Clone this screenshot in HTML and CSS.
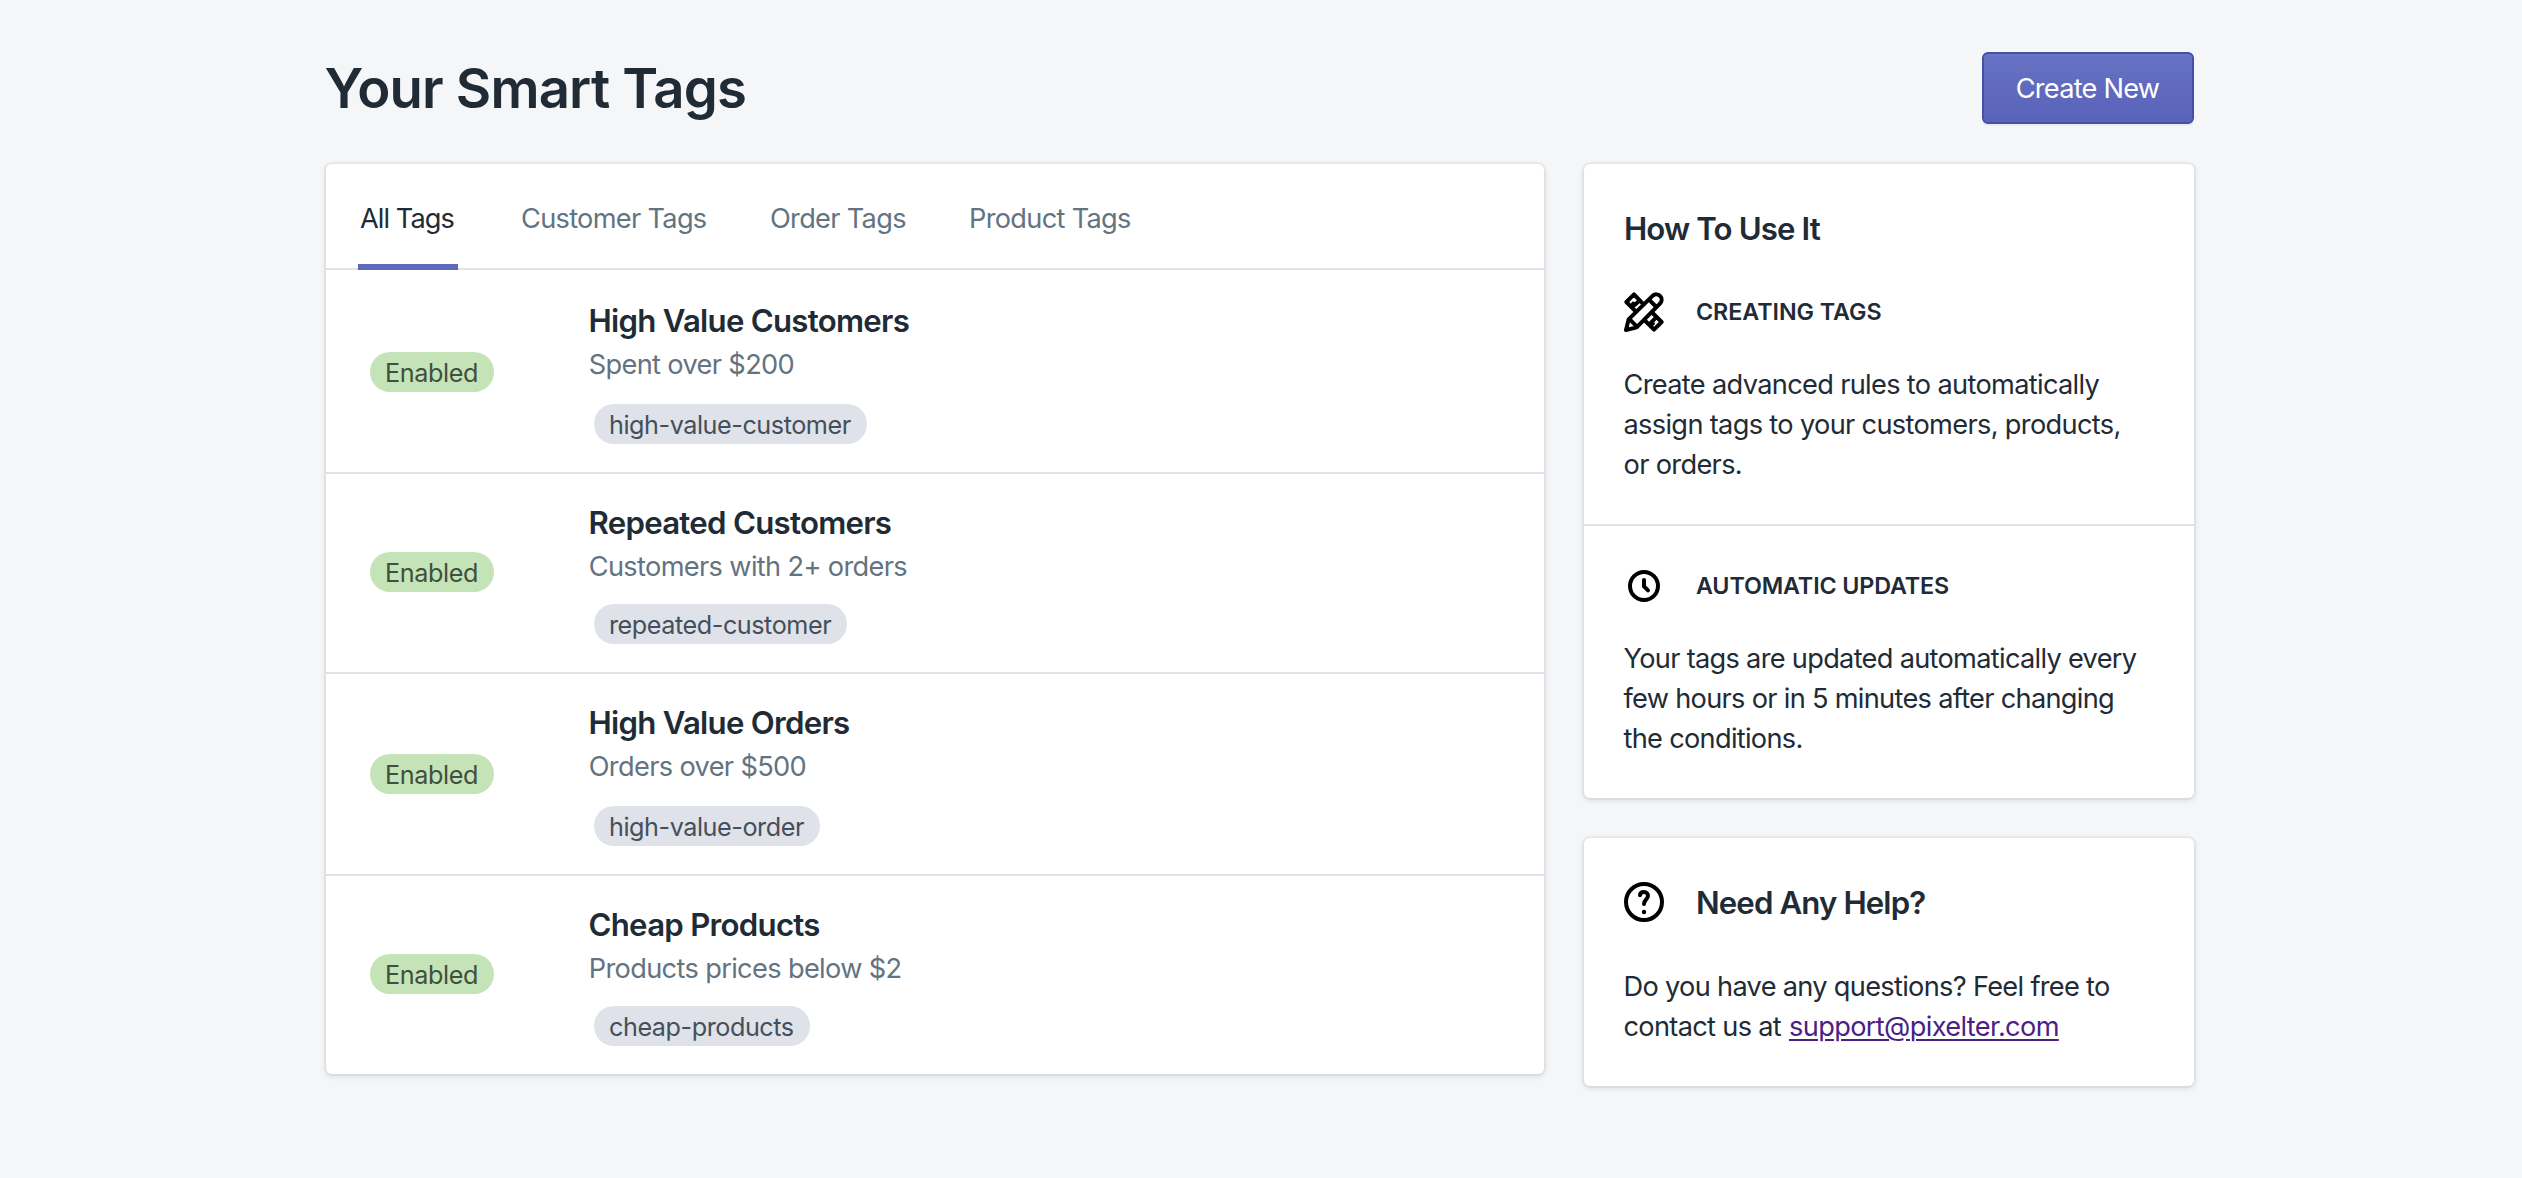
FILE: index.html
```html
<!DOCTYPE html>
<html lang="en">
<head>
<meta charset="utf-8">
<title>Your Smart Tags</title>
<link rel="stylesheet" href="styles.css">
</head>
<body>
<div class="page">
  <header class="page-header">
    <h1 class="page-title">Your Smart Tags</h1>
    <button class="button-primary" type="button">Create New</button>
  </header>
  <div class="layout">
    <main class="card">
      <nav class="tabs">
        <a class="tab tab-active">All Tags</a>
        <a class="tab">Customer Tags</a>
        <a class="tab">Order Tags</a>
        <a class="tab">Product Tags</a>
      </nav>
      <ul class="rules">
        <li class="rule">
          <div class="rule-status"><span class="badge badge-success">Enabled</span></div>
          <div class="rule-body">
            <h2 class="rule-title">High Value Customers</h2>
            <p class="rule-text">Spent over $200</p>
            <span class="badge badge-tag">high-value-customer</span>
          </div>
        </li>
        <li class="rule">
          <div class="rule-status"><span class="badge badge-success">Enabled</span></div>
          <div class="rule-body">
            <h2 class="rule-title">Repeated Customers</h2>
            <p class="rule-text">Customers with 2+ orders</p>
            <span class="badge badge-tag">repeated-customer</span>
          </div>
        </li>
        <li class="rule">
          <div class="rule-status"><span class="badge badge-success">Enabled</span></div>
          <div class="rule-body">
            <h2 class="rule-title">High Value Orders</h2>
            <p class="rule-text">Orders over $500</p>
            <span class="badge badge-tag">high-value-order</span>
          </div>
        </li>
        <li class="rule">
          <div class="rule-status"><span class="badge badge-success">Enabled</span></div>
          <div class="rule-body">
            <h2 class="rule-title">Cheap Products</h2>
            <p class="rule-text">Products prices below $2</p>
            <span class="badge badge-tag">cheap-products</span>
          </div>
        </li>
      </ul>
    </main>
    <aside class="sidebar">
      <section class="card">
        <div class="section">
          <h2 class="heading heading-spaced">How To Use It</h2>
          <div class="topic">
            <svg class="icon" viewBox="0 0 20 20" aria-hidden="true">
              <path d="M9.3 5.7 5 1.200 1.200 5l4.500 4.500M14.3 10.500l4.500 4.500-3.800 3.800-4.300-4.300M7.400 4.600 5.400 6.400M5.400 6.400l-.8-.6M15.600 13.200l-2 2M13.600 15.200l.8.6"/>
              <path d="M1 19l1.300-5.300L14.400 1.800a2.700 2.700 0 0 1 3.800 3.800L6.300 17.700zM12.500 3.800l3.700 3.700M2.600 13.400l4 4"/>
            </svg>
            <h3 class="subheading">CREATING TAGS</h3>
          </div>
          <p class="text text-rules">Create advanced rules to automatically<br>assign tags to your customers, products,<br>or orders.</p>
        </div>
        <div class="section">
          <div class="topic">
            <svg class="icon" viewBox="0 0 20 20" aria-hidden="true">
              <circle cx="10" cy="10" r="7"/>
              <path d="M10 7v3.2L12 12.2"/>
            </svg>
            <h3 class="subheading subheading-tight">AUTOMATIC UPDATES</h3>
          </div>
          <p class="text text-updates">Your tags are updated automatically every<br>few hours or in 5 minutes after changing<br>the conditions.</p>
        </div>
      </section>
      <section class="card">
        <div class="section">
          <div class="help-title">
            <svg class="icon" viewBox="0 0 20 20" aria-hidden="true">
              <circle cx="10" cy="10" r="9"/>
              <path d="M8 6.6C8.1 5.6 8.9 5 10 5c1.200 0 2 .8 2 1.900 0 1.800-2 1.900-2 4.100"/>
              <circle class="icon-dot" cx="10" cy="15" r="1.100"/>
            </svg>
            <h2 class="heading">Need Any Help?</h2>
          </div>
          <p class="text text-help">Do you have any questions? Feel free to<br>contact us at <a class="link" href="mailto:support@pixelter.com">support@pixelter.com</a></p>
        </div>
      </section>
    </aside>
  </div>
</div>
</body>
</html>
```

FILE: styles.css
```css
* { box-sizing: border-box; }

body {
  margin: 0;
  background: #f4f6f8;
  color: #212b36;
  font-family: Inter, "Liberation Sans", sans-serif;
  font-size: 27.2px;
  line-height: 40px;
  letter-spacing: -0.65px;
}

h1, h2, h3, p, ul { margin: 0; padding: 0; }

.page {
  width: 1868px;
  margin: 0 0 0 326px;
  padding: 52px 0 60px;
}

.page-header {
  display: flex;
  justify-content: space-between;
  height: 72px;
  margin-bottom: 40px;
}

.page-title {
  margin-left: -1.5px;
  font-size: 54.5px;
  line-height: 72px;
  font-weight: 600;
  letter-spacing: -0.83px;
}

.button-primary {
  width: 212px;
  height: 72px;
  padding: 2px 1px 0 0;
  border: 2px solid #4350aa;
  border-radius: 6px;
  background: linear-gradient(to bottom, #6672c3, #5963ba);
  box-shadow: inset 0 2px 0 #6b76c4, 0 2px 0 rgba(22, 29, 37, 0.05);
  color: #fff;
  font: inherit;
  letter-spacing: -0.75px;
}

.layout {
  display: grid;
  grid-template-columns: 1218px 610px;
  gap: 40px;
  align-items: start;
}

.card {
  background: #fff;
  border-radius: 6px;
  box-shadow: 0 0 0 2px rgba(63, 63, 68, 0.05), 0 2px 6px rgba(63, 63, 68, 0.15);
}

.tabs {
  display: grid;
  grid-template-columns: 163px 249px 199px 200px;
  height: 106px;
  padding-left: 32px;
  box-shadow: inset 0 -2px 0 #dfe3e8;
}

.tab {
  padding-top: 35px;
  color: #637381;
  letter-spacing: -0.7px;
}

.tab-active {
  width: 100px;
  padding-left: 2px;
  border-bottom: 6px solid #5f69bc;
  color: #212b36;
  letter-spacing: -0.95px;
}

.rules { list-style: none; }

.rule {
  display: grid;
  grid-template-columns: 262px 1fr;
  height: 202px;
}

.rule:nth-child(even) { height: 200px; }
.rule + .rule { box-shadow: inset 0 2px 0 #dfe3e8; }

.rule-status { padding: 82px 0 0 44px; }
.rule:nth-child(even) .rule-status { padding-top: 80px; }

.rule-body {
  display: flex;
  flex-direction: column;
  align-items: flex-start;
  padding-top: 31px;
}

.rule-title {
  margin-left: 0.5px;
  font-size: 31.2px;
  line-height: 40px;
  font-weight: 600;
  letter-spacing: -0.73px;
}

.rule-text {
  margin: 4px 0 0 0.7px;
  color: #637381;
}

.badge {
  display: block;
  width: fit-content;
  height: 40px;
  padding: 0 15px;
  border-radius: 20px;
  font-size: 25.2px;
  line-height: 42px;
  letter-spacing: -0.45px;
}

.badge-success {
  width: 124px;
  background: #c4e4b8;
  color: #414f3e;
  letter-spacing: -0.4px;
}

.badge-tag {
  margin: 19px 0 0 6px;
  padding-right: 16px;
  background: #dfe2e8;
  color: #454f5b;
}

.rule:nth-child(even) .badge-tag { margin-top: 17px; }

.sidebar {
  display: flex;
  flex-direction: column;
  gap: 40px;
}

.section { padding: 40px; }
.section + .section { border-top: 2px solid #dfe3e8; }

.heading {
  font-size: 31.2px;
  line-height: 50px;
  font-weight: 600;
  letter-spacing: -0.88px;
}

.heading-spaced { margin-bottom: 38px; }

.topic {
  display: flex;
  gap: 32px;
  margin-bottom: 32px;
}

.subheading {
  font-size: 23.3px;
  line-height: 40px;
  font-weight: 600;
  letter-spacing: -0.05px;
}

.subheading-tight { letter-spacing: -0.12px; }

.icon {
  width: 40px;
  height: 40px;
  fill: none;
  stroke: #000;
  stroke-width: 2;
  stroke-linecap: round;
  stroke-linejoin: round;
}

.icon-dot { fill: #000; stroke: none; }

.help-title {
  display: flex;
  gap: 32px;
  margin-bottom: 38px;
}

.help-title .icon { margin-top: 4px; }

.text { padding-top: 1px; margin: 0 0 -1px -0.5px; }
.text-rules { letter-spacing: -0.67px; }
.text-updates { letter-spacing: -0.7px; }
.text-help { letter-spacing: -0.69px; }

.link {
  margin-left: 1px;
  color: #4b1f88;
  text-decoration: underline;
  text-decoration-thickness: 2px;
  text-underline-offset: 3px;
  letter-spacing: -0.64px;
}
```
